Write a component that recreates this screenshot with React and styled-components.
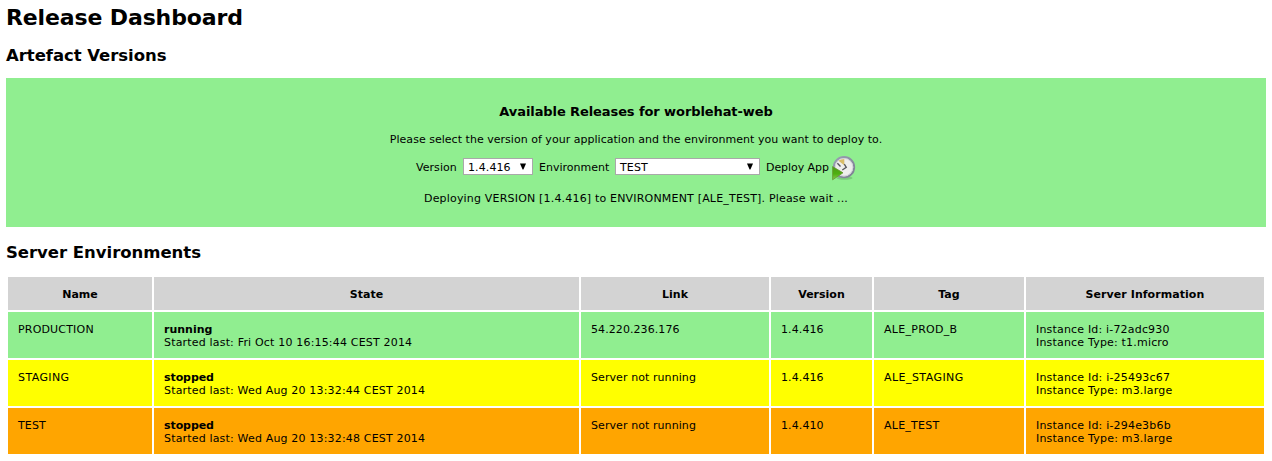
import React from "react";
import styled, { createGlobalStyle } from "styled-components";

const GlobalStyle = createGlobalStyle`
  body {
    margin: 0;
    background: #fff;
    color: #000;
    font: 11px/13px Verdana, "DejaVu Sans", sans-serif;
  }
`;

const Page = styled.main`
  box-sizing: border-box;
  height: 461px;
  padding: 4px 6px 0;
  overflow: hidden;
`;

const Title = styled.h1`
  margin: 0;
  font-size: 22px;
  line-height: 27px;
  letter-spacing: ${(p) => p.$track || 0}px;
`;

const SectionTitle = styled.h2`
  margin: ${(p) => p.$top}px 0 ${(p) => p.$bottom}px;
  font-size: 16.5px;
  line-height: 20px;
  letter-spacing: ${(p) => p.$track || 0}px;
`;

const ReleasePanel = styled.section`
  box-sizing: border-box;
  display: flex;
  flex-direction: column;
  align-items: center;
  height: 149px;
  padding-top: 26px;
  background: #90ee90;
`;

const PanelTitle = styled.h3`
  margin: 0 0 13px;
  font-size: 13px;
  line-height: 16px;
  letter-spacing: ${(p) => p.$track || 0}px;
`;

const Line = styled.p`
  margin: 0;
  white-space: nowrap;
  letter-spacing: ${(p) => p.$track || 0}px;
`;

const Controls = styled.div`
  display: flex;
  align-items: center;
  gap: 6px;
  height: 25px;
  margin: 10px 0 11px;
`;

const Label = styled.span`
  width: ${(p) => p.$width}px;
  padding-bottom: 2px;
  white-space: nowrap;
  letter-spacing: ${(p) => p.$track || 0}px;
`;

const SelectBox = styled.div`
  box-sizing: border-box;
  display: flex;
  align-items: center;
  justify-content: space-between;
  width: ${(p) => p.$width}px;
  height: 17px;
  margin-bottom: 4px;
  padding: 0 6px 0 4px;
  border: 1px solid #a9a9a9;
  background: #fff;
`;

const SelectValue = styled.span`
  padding-top: 2px;
  letter-spacing: ${(p) => p.$track || 0}px;
`;

const DeployAction = styled.div`
  display: flex;
  align-items: center;
  gap: 3px;
`;

const Table = styled.table`
  width: 1260px;
  table-layout: fixed;
  border-spacing: 2px;
`;

const Col = styled.col`
  width: ${(p) => p.$width}px;
`;

const HeadCell = styled.th`
  height: 13px;
  padding: 11px 10px 9px;
  background: #d3d3d3;
  letter-spacing: ${(p) => p.$track || 0}px;
`;

const Cell = styled.td`
  height: 26px;
  padding: 11px 10px 9px;
  background: ${(p) => p.$color};
  vertical-align: top;
  white-space: nowrap;
`;

const Text = styled.div`
  font-weight: ${(p) => (p.$bold ? 700 : 400)};
  letter-spacing: ${(p) => p.$track || 0}px;
`;

const Select = ({ width, children, track }) => (
  <SelectBox $width={width}>
    <SelectValue $track={track}>{children}</SelectValue>
    <svg width="6" height="7" viewBox="0 0 6 7">
      <path d="M0 0.5H6L3.4 6.6H2.6Z" fill="#000" />
    </svg>
  </SelectBox>
);

const DeployIcon = () => (
  <svg width="24" height="25" viewBox="0 0 24 25">
    <defs>
      <linearGradient id="rim" x1="0" y1="0" x2="1" y2="1">
        <stop offset="0" stopColor="#9ba0b4" />
        <stop offset="1" stopColor="#7b7e90" />
      </linearGradient>
      <linearGradient id="play" x1="0" y1="0" x2="0" y2="1">
        <stop offset="0" stopColor="#4f9a16" />
        <stop offset="0.55" stopColor="#4eb010" />
        <stop offset="1" stopColor="#8ccc50" />
      </linearGradient>
    </defs>
    <ellipse cx="12.5" cy="22" rx="8" ry="1.8" fill="#4c7c4c" opacity="0.3" />
    <circle cx="12" cy="11.2" r="10.2" fill="#eeeeec" stroke="url(#rim)" strokeWidth="1.9" />
    <circle cx="12" cy="11.2" r="8.8" fill="none" stroke="#c7c8d2" strokeWidth="0.7" />
    <path d="M12.3 9.2L6.4 4.8Q9 3 12.3 3Z" fill="#d9bd69" />
    <path d="M5.4 7.2L8.5 10.5M12.3 8.2L14.3 11.4L10.3 14" fill="none" stroke="#55555b" strokeWidth="1.3" />
    <path d="M0.6 10.6L11 16.8L0.6 23.8Z" fill="url(#play)" stroke="#64962e" strokeWidth="0.8" />
  </svg>
);

const columns = [
  ["Name", 144, 0],
  ["State", 425, 0],
  ["Link", 188, 0],
  ["Version", 101, 0],
  ["Tag", 150, 0.1],
  ["Server Information", 238, 0.06],
];

const servers = [
  {
    color: "#90ee90",
    name: ["PRODUCTION", 0.18],
    state: ["running", 0],
    started: ["Started last: Fri Oct 10 16:15:44 CEST 2014", 0.18],
    link: ["54.220.236.176", 0.08],
    version: ["1.4.416", 0.1],
    tag: ["ALE_PROD_B", 0.28],
    id: ["Instance Id: i-72adc930", 0.18],
    type: ["Instance Type: t1.micro", 0.19],
  },
  {
    color: "#ffff00",
    name: ["STAGING", 0.4],
    state: ["stopped", -0.08],
    started: ["Started last: Wed Aug 20 13:32:44 CEST 2014", 0.17],
    link: ["Server not running", 0.08],
    version: ["1.4.416", 0.1],
    tag: ["ALE_STAGING", 0.45],
    id: ["Instance Id: i-25493c67", 0.19],
    type: ["Instance Type: m3.large", 0.2],
  },
  {
    color: "#ffa500",
    name: ["TEST", 0.15],
    state: ["stopped", -0.08],
    started: ["Started last: Wed Aug 20 13:32:48 CEST 2014", 0.17],
    link: ["Server not running", 0.08],
    version: ["1.4.410", 0.1],
    tag: ["ALE_TEST", 0.25],
    id: ["Instance Id: i-294e3b6b", 0.19],
    type: ["Instance Type: m3.large", 0.2],
  },
];

const fields = [["name"], ["state", "started"], ["link"], ["version"], ["tag"], ["id", "type"]];

export default function App() {
  return (
    <Page>
      <GlobalStyle />
      <Title $track={-0.13}>Release Dashboard</Title>
      <SectionTitle $top={15} $bottom={12} $track={-0.05}>Artefact Versions</SectionTitle>
      <ReleasePanel>
        <PanelTitle $track={-0.09}>Available Releases for worblehat-web</PanelTitle>
        <Line $track={0.025}>Please select the version of your application and the environment you want to deploy to.</Line>
        <Controls>
          <Label $width={41} $track={0.05}>Version</Label>
          <Select width={70} track={0.1}>1.4.416</Select>
          <Label $width={70}>Environment</Label>
          <Select width={145} track={0.15}>TEST</Select>
          <DeployAction>
            <Label $width={63} $track={-0.06}>Deploy App</Label>
            <DeployIcon />
          </DeployAction>
        </Controls>
        <Line $track={0.185}>Deploying VERSION [1.4.416] to ENVIRONMENT [ALE_TEST]. Please wait ...</Line>
      </ReleasePanel>
      <SectionTitle $top={16} $bottom={12} $track={-0.03}>Server Environments</SectionTitle>
      <Table>
        <colgroup>
          {columns.map(([name, width]) => <Col key={name} $width={width} />)}
        </colgroup>
        <thead>
          <tr>
            {columns.map(([name, , track]) => <HeadCell key={name} $track={track}>{name}</HeadCell>)}
          </tr>
        </thead>
        <tbody>
          {servers.map((server) => (
            <tr key={server.name[0]}>
              {fields.map((keys) => (
                <Cell key={keys[0]} $color={server.color}>
                  {keys.map((key) => (
                    <Text key={key} $bold={key === "state"} $track={server[key][1]}>
                      {server[key][0]}
                    </Text>
                  ))}
                </Cell>
              ))}
            </tr>
          ))}
        </tbody>
      </Table>
    </Page>
  );
}
